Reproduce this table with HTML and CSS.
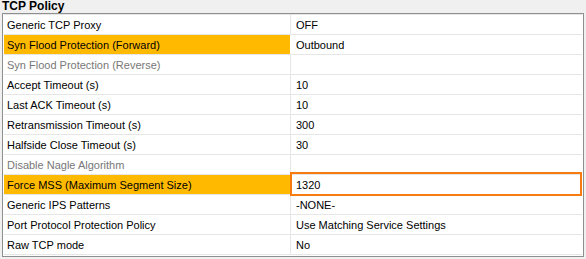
FILE: index.html
```html
<!DOCTYPE html>
<html>
<head>
<meta charset="utf-8">
<link rel="stylesheet" href="styles.css">
</head>
<body>
<div class="title">TCP Policy</div>
<div class="grid">
  <div class="row"><div class="key">Generic TCP Proxy</div><div class="val">OFF</div></div>
  <div class="row hl"><div class="key">Syn Flood Protection (Forward)</div><div class="val">Outbound</div></div>
  <div class="row dis"><div class="key">Syn Flood Protection (Reverse)</div><div class="val"></div></div>
  <div class="row"><div class="key">Accept Timeout (s)</div><div class="val">10</div></div>
  <div class="row"><div class="key">Last ACK Timeout (s)</div><div class="val">10</div></div>
  <div class="row"><div class="key">Retransmission Timeout (s)</div><div class="val">300</div></div>
  <div class="row"><div class="key">Halfside Close Timeout (s)</div><div class="val">30</div></div>
  <div class="row dis"><div class="key">Disable Nagle Algorithm</div><div class="val"></div></div>
  <div class="row hl"><div class="key">Force MSS (Maximum Segment Size)</div><div class="val edit">1320</div></div>
  <div class="row"><div class="key">Generic IPS Patterns</div><div class="val">-NONE-</div></div>
  <div class="row"><div class="key">Port Protocol Protection Policy</div><div class="val">Use Matching Service Settings</div></div>
  <div class="row last"><div class="key">Raw TCP mode</div><div class="val">No</div></div>
</div>
</body>
</html>
```
FILE: styles.css
```css
html, body {
  margin: 0;
  padding: 0;
  background: #f0f0f0;
}
body {
  font-family: "Liberation Sans", Arial, sans-serif;
  font-size: 11px;
  color: #000;
}
.title {
  font-weight: bold;
  font-size: 12px;
  line-height: 13px;
  height: 13px;
  padding-left: 2px;
}
.grid {
  margin-left: 2px;
  width: 582px;
  box-sizing: border-box;
  border: 1px solid #8e8f8f;
  background: #fff;
  padding: 0 1px 1px 1px;
}
.row {
  display: grid;
  grid-template-columns: 287px 1fr;
  height: 20px;
  box-sizing: border-box;
  border-top: 1px solid #e6e6e6;
}
.row.last {
  height: 21px;
  border-bottom: 1px solid #e6e6e6;
}
.key {
  padding: 2px 0 0 3px;
  line-height: 17px;
  border-right: 1px solid #e6e6e6;
  white-space: nowrap;
}
.val {
  padding: 2px 0 0 5px;
  line-height: 17px;
  white-space: nowrap;
}
.hl .key {
  background: #ffba00;
  border-right-color: #fff;
}
.dis .key {
  color: #777;
}
.val.edit {
  position: relative;
}
.val.edit::after {
  content: "";
  position: absolute;
  left: -1px;
  right: 0;
  top: -3px;
  bottom: -2px;
  border: 2px solid #f87b0f;
}
```
